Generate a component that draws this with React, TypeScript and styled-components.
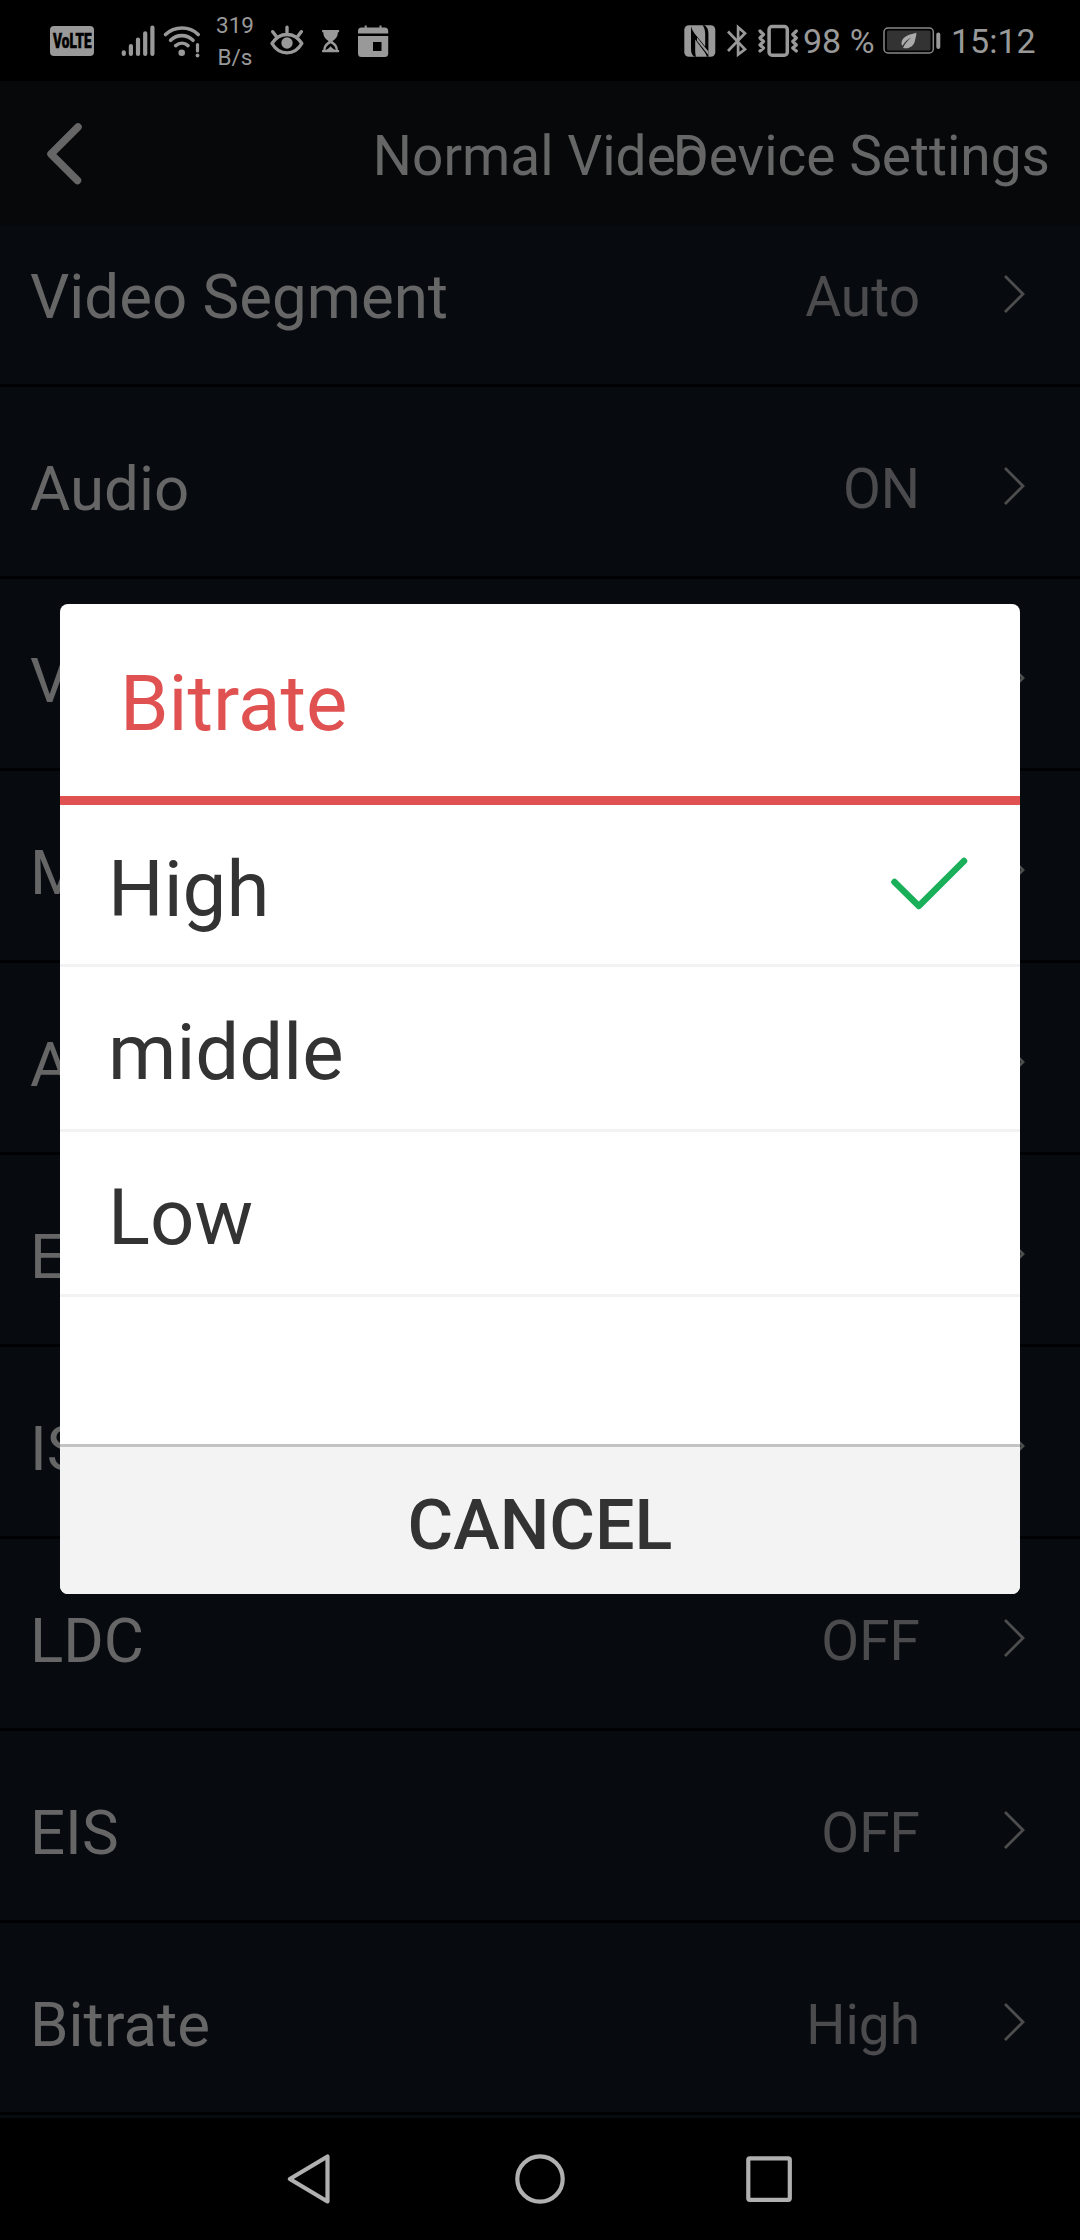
import React from "react";
import styled, { createGlobalStyle } from "styled-components";

const GlobalStyle = createGlobalStyle`
  * { box-sizing: border-box; }
  body { margin: 0; background: #000; font-family: Roboto, "Noto Sans", sans-serif; }
`;

const Screen = styled.div`
  position: relative;
  display: grid;
  grid-template-rows: 81px 144px 1893px 122px;
  width: 1080px;
  height: 2240px;
  overflow: hidden;
  background: #000;
`;

const StatusBar = styled.div`
  display: flex;
  justify-content: space-between;
  padding: 0 46px 0 50px;
  color: #999;
`;

const StatusGroup = styled.div`
  display: flex;
  align-items: center;
  height: 81px;
`;

const Glyph = styled.svg<{ $gap?: number }>`
  display: block;
  flex: none;
  margin-left: ${(p) => p.$gap ?? 0}px;
  overflow: visible;
`;

const VolteBadge = styled.div`
  display: flex;
  align-items: center;
  justify-content: center;
  width: 44px;
  height: 30px;
  border-radius: 4px;
  background: #999;
`;

const VolteText = styled.span`
  color: #000;
  font-size: 20px;
  font-weight: 900;
  line-height: 30px;
  transform: scaleX(0.68);
  -webkit-text-stroke: 0.6px #000;
`;

const NetSpeed = styled.div`
  width: 40px;
  margin: 1px 0 0 14px;
  font-size: 22.5px;
  line-height: 32px;
  text-align: center;
`;

const StatusText = styled.span<{ $gap: number; $width: number }>`
  width: ${(p) => p.$width}px;
  margin-left: ${(p) => p.$gap}px;
  font-size: 34px;
  line-height: 40px;
  white-space: nowrap;
`;

const Header = styled.header`
  display: grid;
  grid-template-columns: 1fr;
  align-items: center;
  padding: 6px 30px 0;
  background: #060809;
  color: #666;
  > * { grid-area: 1 / 1; }
`;

const BackButton = styled.button`
  justify-self: start;
  margin: -5px 0 0 15px;
  padding: 0;
  border: 0;
  background: none;
`;

const HeaderText = styled.div<{ $align: "center" | "end" }>`
  justify-self: ${(p) => p.$align};
  font-size: 55px;
  line-height: 64px;
  white-space: nowrap;
`;

const ListViewport = styled.main`
  overflow: hidden;
  background: #070b10;
`;

const List = styled.div`
  display: flex;
  flex-direction: column;
  margin-top: -30px;
`;

const Row = styled.div`
  display: flex;
  align-items: center;
  height: 192px;
  padding: 15px 53px 0 30px;
  border-bottom: 3px solid #000103;
`;

const RowLabel = styled.span`
  flex: 1;
  color: #666;
  font-size: 61.8px;
  line-height: 72px;
`;

const RowValue = styled.span`
  margin-right: 83px;
  color: #4b4b4d;
  font-size: 55px;
  line-height: 64px;
`;

const RowChevron = styled.svg`
  display: block;
  margin-bottom: 6px;
`;

const Dialog = styled.section`
  position: absolute;
  left: 60px;
  top: 604px;
  display: flex;
  flex-direction: column;
  width: 960px;
  height: 990px;
  border-radius: 8px;
  overflow: hidden;
  background: #fff;
`;

const DialogTitle = styled.div`
  height: 201px;
  padding: 55px 60px 0;
  border-bottom: 9px solid #e05252;
  color: #e05252;
  font-size: 78px;
  line-height: 90px;
`;

const Option = styled.div<{ $height: number }>`
  display: flex;
  align-items: center;
  justify-content: space-between;
  height: ${(p) => p.$height}px;
  padding: 10px 51px 0 48px;
  border-bottom: 3px solid #f2f2f2;
  color: #333;
  font-size: 78px;
  line-height: 90px;
`;

const CheckSlot = styled.span`
  padding-bottom: 11px;
`;

const CancelButton = styled.button`
  height: 150px;
  margin-top: auto;
  padding: 8px 0 0;
  border: 0;
  border-top: 3px solid #c3c3c3;
  background: #f3f3f3;
  color: #333;
  font: 500 70px/80px Roboto, sans-serif;
`;

const NavBar = styled.nav`
  display: flex;
  align-items: flex-start;
  justify-content: center;
  gap: 180px;
  padding-top: 36px;
`;

const SETTINGS: { label: string; value?: string }[] = [
  { label: "Video Segment", value: "Auto" },
  { label: "Audio", value: "ON" },
  { label: "V" },
  { label: "M" },
  { label: "A" },
  { label: "E" },
  { label: "IS" },
  { label: "LDC", value: "OFF" },
  { label: "EIS", value: "OFF" },
  { label: "Bitrate", value: "High" },
  { label: "" },
];

const OPTIONS = [
  { label: "High", height: 162, selected: true },
  { label: "middle", height: 165, selected: false },
  { label: "Low", height: 165, selected: false },
];

const SignalIcon = () => (
  <Glyph $gap={28} width="32" height="32" viewBox="122 24 32 32" stroke="#999" strokeWidth="4.2" strokeLinecap="round">
    <path d="M123.8 51.3v1.7M130.9 45v8M138 38.5v14.5M145.2 32.3V53M152.4 26.6V53" />
  </Glyph>
);

const WifiIcon = () => (
  <Glyph $gap={9} width="38" height="32" viewBox="163 24 38 32" fill="none" stroke="#999" strokeWidth="3.6" strokeLinecap="round">
    <path d="M165.5 33.5C174.5 24.8 189.5 24.8 198.2 33.5M170.6 39.3C177 33 186.5 33 193 39.3M175.7 44.6C179.5 41.5 184.5 41.5 188 44.6" />
    <path d="M197.5 43.5v6.5" strokeWidth="3.2" />
    <circle cx="181.7" cy="51.7" r="3.3" fill="#999" stroke="none" />
    <circle cx="197.5" cy="54.5" r="1.9" fill="#999" stroke="none" />
  </Glyph>
);

const EyeIcon = () => (
  <Glyph $gap={15} width="34" height="32" viewBox="270.5 25 34 32" fill="none" stroke="#999" strokeWidth="3.4" strokeLinecap="round" strokeLinejoin="round">
    <path d="M272.5 43.5C280 31.5 295 31.5 302.3 43.5C295 56 280 56 272.5 43.5Z" />
    <path d="M287.5 27.3v5M273.2 31.7l3.3 4.3M301.8 31.7l-3.3 4.3" />
    <circle cx="287.5" cy="43" r="5.7" fill="#999" stroke="none" />
  </Glyph>
);

const HourglassIcon = () => (
  <Glyph $gap={18} width="17" height="32" viewBox="322.5 25 17 32" fill="none">
    <path d="M322.6 30h17v2.3h-1.2c0 4.400-2.300 6.800-5.400 8.900c3.100 2.100 5.400 4.500 5.400 8.700h1.200v2.300h-17v-2.300h1.200c0-4.200 2.300-6.600 5.400-8.700c-3.100-2.100-5.400-4.500-5.400-8.900h-1.200z" fill="#999" />
    <path d="M326 50c.2-3 1.600-4.700 5.100-6.800c3.500 2.100 4.900 3.800 5.100 6.800c-1.700-.4-3.300-1.600-5.100-3.700c-1.800 2.100-3.400 3.300-5.100 3.700z" fill="#000" />
  </Glyph>
);

const CalendarIcon = () => (
  <Glyph $gap={18.5} width="30" height="32" viewBox="358 25 30 32" fill="#999">
    <path d="M358 33.600v-2.500q0-3.500 3.500-3.500h3.200v-2h2v2h12.800v-2h2v2h3.200q3.500 0 3.500 3.500v2.500z" />
    <path fillRule="evenodd" d="M358 36h30.200v17.500q0 3.500-3.500 3.500h-23.200q-3.500 0-3.500-3.500zM373 42v9h8.500v-9z" />
  </Glyph>
);

const NfcIcon = () => (
  <Glyph width="31" height="32" viewBox="684 24 31 32">
    <rect x="684.3" y="24.3" width="31" height="31.500" rx="4.500" fill="#999" />
    <path d="M691 25.200C692 29.500 694.500 32 696.200 34.500L705.200 45.500V33C705.200 29 704 26 702.500 24.300H704.500C707.200 26 708.400 28.500 708.400 32.500V55.800H706.800C706.500 53.500 704.500 51 703 49L695.200 38.500V49.500C695.200 52 695.500 54 696 55.800H694.500C692.200 54.500 691 52 691 48Z" fill="#000" />
    <path d="M697 36.500L708.400 50.500V54L697 39.800Z" fill="#999" />
  </Glyph>
);

const BluetoothIcon = () => (
  <Glyph $gap={12} width="20" height="32" viewBox="726.500 24 20 32" fill="none" stroke="#999" strokeWidth="2.700">
    <path d="M727.500 30.500L744.500 48.300L737.600 53.500V26.300L744.500 32.300L727.500 50" />
  </Glyph>
);

const VibrateIcon = () => (
  <Glyph $gap={11} width="40" height="32" viewBox="757.500 24 40 32" fill="none" stroke="#999" strokeWidth="3.500" strokeLinejoin="round" strokeLinecap="round">
    <rect x="768.600" y="25.600" width="18.200" height="28.600" rx="3" />
    <path strokeWidth="3.200" d="M759.500 30l3.500 3.500l-3.500 3.500l3.500 3.500l-3.500 3.500l3.500 3l-3.500 3M795.800 30l-3.500 3.500l3.500 3.500l-3.500 3.500l3.500 3.500l-3.500 3l3.500 3" />
  </Glyph>
);

const BatteryIcon = () => (
  <Glyph $gap={9} width="58" height="27" viewBox="883 27 58 27">
    <rect x="884" y="28" width="49.300" height="25" rx="4" fill="#000" stroke="#888" strokeWidth="1.500" />
    <rect x="887" y="30.500" width="43.500" height="20" rx="1.500" fill="#333" />
    <rect x="936.300" y="32.500" width="4" height="16.500" rx="2" fill="#999" />
    <path d="M916.300 32.700C907 35 901.500 37.500 901.500 43.500C901.500 44.600 901.900 45.200 902.500 45.700C905 41.500 907.500 39.500 911.500 37.500C907.500 40.700 905 43.300 903 48C909 49.500 914 46 915 40.500C915.500 37.500 916.500 36 916.300 32.700Z" fill="#aaa" />
  </Glyph>
);

export default function App() {
  return (
    <>
      <GlobalStyle />
      <Screen>
        <StatusBar>
          <StatusGroup>
            <VolteBadge>
              <VolteText>VoLTE</VolteText>
            </VolteBadge>
            <SignalIcon />
            <WifiIcon />
            <NetSpeed>
              319
              <br />
              B/s
            </NetSpeed>
            <EyeIcon />
            <HourglassIcon />
            <CalendarIcon />
          </StatusGroup>
          <StatusGroup>
            <NfcIcon />
            <BluetoothIcon />
            <VibrateIcon />
            <StatusText $gap={5} $width={71}>98 %</StatusText>
            <BatteryIcon />
            <StatusText $gap={10} $width={83}>15:12</StatusText>
          </StatusGroup>
        </StatusBar>

        <Header>
          <BackButton aria-label="Back">
            <Glyph width="40" height="64" viewBox="45 121.500 40 64" fill="none" stroke="#666" strokeWidth="7.500" strokeLinecap="round" strokeLinejoin="round">
              <path d="M78 126.500L51 153.500L77.500 180" />
            </Glyph>
          </BackButton>
          <HeaderText $align="center">Normal Video</HeaderText>
          <HeaderText $align="end">Device Settings</HeaderText>
        </Header>

        <ListViewport>
          <List>
            {SETTINGS.map((s, i) => (
              <Row key={i}>
                <RowLabel>{s.label}</RowLabel>
                {s.value && <RowValue>{s.value}</RowValue>}
                <RowChevron width="24" height="40" viewBox="0 0 24 40" fill="none" stroke="#4d4d4d" strokeWidth="2.800">
                  <path d="M2 2L20 20L2 38" />
                </RowChevron>
              </Row>
            ))}
          </List>
        </ListViewport>

        <NavBar>
          <Glyph width="50" height="50" viewBox="285 2154 50 50" fill="none" stroke="#b0b0b0" strokeWidth="4.200" strokeLinejoin="round">
            <path d="M327.500 2156.500V2201.500L289.800 2179Z" />
          </Glyph>
          <Glyph width="50" height="50" viewBox="0 0 50 50" fill="none" stroke="#b0b0b0" strokeWidth="4.200">
            <circle cx="25" cy="25" r="22.700" />
          </Glyph>
          <Glyph width="50" height="50" viewBox="745 2154 50 50" fill="none" stroke="#b0b0b0" strokeWidth="4.200">
            <rect x="748.300" y="2158.300" width="41.500" height="41.500" rx="1.500" />
          </Glyph>
        </NavBar>

        <Dialog role="dialog" aria-label="Bitrate">
          <DialogTitle>Bitrate</DialogTitle>
          {OPTIONS.map((o) => (
            <Option key={o.label} $height={o.height}>
              {o.label}
              {o.selected && (
                <CheckSlot>
                  <Glyph width="80" height="56" viewBox="889 856 80 56" fill="none" stroke="#1aaf59" strokeWidth="6.500" strokeLinecap="round" strokeLinejoin="round">
                    <path d="M894.500 882L918.800 906L964 861" />
                  </Glyph>
                </CheckSlot>
              )}
            </Option>
          ))}
          <CancelButton>CANCEL</CancelButton>
        </Dialog>
      </Screen>
    </>
  );
}
